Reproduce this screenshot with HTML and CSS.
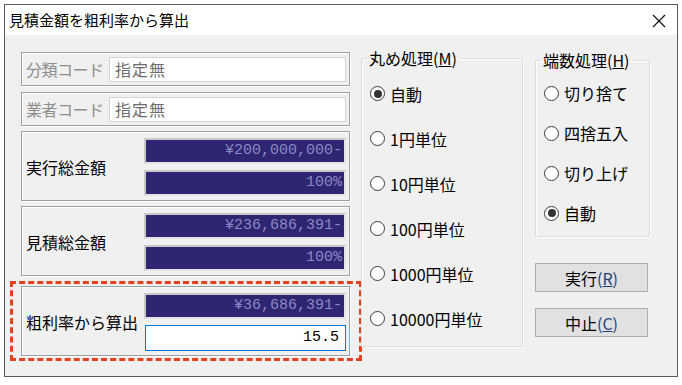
FILE: index.html
```html
<!DOCTYPE html>
<html lang="ja">
<head>
  <meta charset="UTF-8">
  <title>見積金額を粗利率から算出</title>
  <link rel="stylesheet" href="styles.css">
</head>
<body>

  <div class="window">
    <div class="titlebar">
      <span class="title">見積金額を粗利率から算出</span>
      <svg class="close" width="14" height="14" viewBox="0 0 14 14">
        <path d="M1 1 L13 13 M13 1 L1 13" stroke="#111" stroke-width="1.2" fill="none"/>
      </svg>
    </div>

    <div class="content">
      <!-- Left: codes and totals -->
      <div class="left">
        <div class="group row">
          <span class="label disabled">分類コード</span>
          <div class="textbox">指定無</div>
        </div>
        <div class="group row">
          <span class="label disabled">業者コード</span>
          <div class="textbox">指定無</div>
        </div>
        <div class="group pair">
          <span class="label">実行総金額</span>
          <div class="fields">
            <div class="readout">¥200,000,000-</div>
            <div class="readout">100%</div>
          </div>
        </div>
        <div class="group pair">
          <span class="label">見積総金額</span>
          <div class="fields">
            <div class="readout">¥236,686,391-</div>
            <div class="readout">100%</div>
          </div>
        </div>
        <div class="highlight">
          <div class="group pair">
            <span class="label">粗利率から算出</span>
            <div class="fields">
              <div class="readout">¥36,686,391-</div>
              <div class="input">15.5</div>
            </div>
          </div>
        </div>
      </div>

      <!-- Middle: rounding -->
      <fieldset class="rounding">
        <legend>丸め処理(<u>M</u>)</legend>
        <div class="radio checked"><span class="dot"></span>自動</div>
        <div class="radio"><span class="dot"></span>1円単位</div>
        <div class="radio"><span class="dot"></span>10円単位</div>
        <div class="radio"><span class="dot"></span>100円単位</div>
        <div class="radio"><span class="dot"></span>1000円単位</div>
        <div class="radio"><span class="dot"></span>10000円単位</div>
      </fieldset>

      <!-- Right: fractions and buttons -->
      <div class="right">
        <fieldset class="fraction">
          <legend>端数処理(<u>H</u>)</legend>
          <div class="radio"><span class="dot"></span>切り捨て</div>
          <div class="radio"><span class="dot"></span>四捨五入</div>
          <div class="radio"><span class="dot"></span>切り上げ</div>
          <div class="radio checked"><span class="dot"></span>自動</div>
        </fieldset>
        <button class="btn">実行<span class="key">(<u>R</u>)</span></button>
        <button class="btn second">中止<span class="key">(<u>C</u>)</span></button>
      </div>
    </div>
  </div>

</body>
</html>
```

FILE: styles.css
```css
body {
  margin: 0;
  background: #fff;
  font-family: "Noto Sans CJK JP", "Noto Sans", sans-serif;
  color: #000;
}

.window {
  box-sizing: border-box;
  width: 674px;
  height: 373px;
  margin: 4px 0 0 4px;
  border: 1px solid #5a5a5a;
}

.titlebar {
  height: 30px;
  display: flex;
  align-items: center;
  justify-content: space-between;
  padding: 0 11px 0 4px;
  background: #fff;
}

.title {
  font-size: 15px;
  line-height: 18px;
}

.close {
  display: block;
  margin-top: 2px;
}

.content {
  height: 341px;
  background: #f0f0f0;
  display: flex;
  align-items: flex-start;
}

/* left column */
.left {
  width: 329px;
  margin: 17px 0 0 16px;
}

.group {
  box-sizing: border-box;
  border: 1px solid #a0a0a0;
  box-shadow: inset 1px 1px 0 #fff, 1px 1px 0 #fff;
  display: flex;
  align-items: center;
}

.row {
  height: 34px;
  padding: 0 3px 0 4px;
  margin-bottom: 6px;
}

.row + .pair {
  margin-top: -1px;
}

.pair {
  padding: 6px 3px 4px 4px;
  margin-bottom: 5px;
}

.label {
  flex: 1;
  font-size: 16px;
  line-height: 20px;
  white-space: nowrap;
}

.label.disabled {
  color: #8d8d8d;
  letter-spacing: -0.5px;
}

.textbox {
  box-sizing: border-box;
  width: 237px;
  height: 25px;
  background: #fff;
  border: 1px solid #d4d4d4;
  padding-left: 5px;
  font-size: 16px;
  line-height: 23px;
  letter-spacing: 1px;
  color: #6d6d6d;
}

.fields {
  width: 202px;
  display: flex;
  flex-direction: column;
  gap: 6px;
}

.readout {
  box-sizing: border-box;
  height: 26px;
  border: 2px solid;
  border-color: #c8c8c8 #e4e4e4 #e4e4e4 #c8c8c8;
  background: #2e2573;
  color: #8c89c4;
  font-family: "Liberation Mono", monospace;
  font-size: 15px;
  line-height: 22px;
  text-align: right;
  padding-right: 2px;
}

.input {
  box-sizing: border-box;
  height: 26px;
  margin-left: 1px;
  border: 1px solid #0078d7;
  background: #fff;
  font-family: "Liberation Mono", monospace;
  font-size: 15px;
  line-height: 24px;
  text-align: right;
  padding-right: 6px;
}

.highlight {
  margin: 3px -12px 0 -11px;
  border: 3px dashed #e5401c;
  padding: 2px 9px 2px 8px;
}

.highlight .group {
  margin-bottom: 0;
}

/* option groups */
fieldset {
  box-sizing: border-box;
  margin: 0;
  min-inline-size: 0;
  border: 1px solid #dcdcdc;
  box-shadow: inset 1px 1px 0 #fff, 1px 1px 0 #fff;
}

legend {
  margin-left: -3px;
  padding: 0 2px;
  font-size: 16px;
  line-height: 18px;
}

.rounding {
  width: 162px;
  margin: 14px 0 0 11px;
  padding: 4px 0 5px 8px;
}

.rounding .radio {
  height: 45px;
}

.right {
  width: 115px;
  margin: 16px 0 0 12px;
}

.fraction {
  width: 115px;
  padding: 4px 0 3px 8px;
}

.fraction .radio {
  height: 40px;
}

.radio {
  display: flex;
  align-items: center;
  gap: 5px;
  font-size: 16px;
  line-height: 20px;
  white-space: nowrap;
}

.dot {
  box-sizing: border-box;
  width: 15px;
  height: 15px;
  border: 1px solid #3c3c3c;
  border-radius: 50%;
  background: #fff;
  display: flex;
  align-items: center;
  justify-content: center;
}

.checked .dot::after {
  content: "";
  width: 8px;
  height: 8px;
  border-radius: 50%;
  background: #333;
}

.btn {
  display: block;
  box-sizing: border-box;
  width: 113px;
  height: 29px;
  margin-top: 26px;
  padding: 0;
  background: #e1e1e1;
  border: 1px solid #adadad;
  font-family: "Noto Sans CJK JP", "Noto Sans", sans-serif;
  font-size: 16px;
  line-height: 20px;
  color: #000;
}

.btn.second {
  margin-top: 16px;
}

.key {
  color: #1f3f7a;
}
```
